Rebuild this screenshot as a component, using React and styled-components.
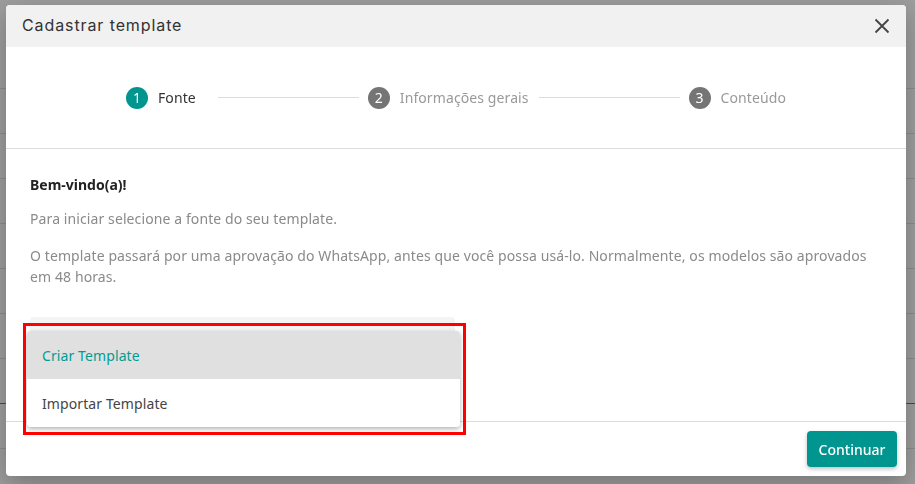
import React from 'react';
import styled, {createGlobalStyle} from "styled-components";

const GlobalStyle = createGlobalStyle`
  html, body {
    margin: 0;
    padding: 0;
    width: 915px;
    height: 484px;
    overflow: hidden;
  }
  body {
    font-family: "Noto Sans", "Open Sans", sans-serif;
  }
`;

const steps = [
    {n: 1, label: "Fonte", active: true},
    {n: 2, label: "Informações gerais"},
    {n: 3, label: "Conteúdo"},
];

const rows = Array.from({length: 9});

const App = () => {
    return (
        <>
            <GlobalStyle/>
            <StyledPage>
                {rows.map((_, i) => (
                    <StyledPageRow key={i} $dark={i === 7}/>
                ))}
            </StyledPage>
            <StyledBackdrop>
                <StyledModal>
                    <StyledHeader>
                        <h2>Cadastrar template</h2>
                        <StyledClose aria-label="Fechar">
                            <svg width="16" height="16" viewBox="0 0 16 16">
                                <path d="M1.5 1.5 L14.5 14.5 M14.5 1.5 L1.5 14.5" stroke="#444" strokeWidth="1.8" fill="none"/>
                            </svg>
                        </StyledClose>
                    </StyledHeader>
                    <StyledStepper>
                        {steps.map((step, i) => (
                            <React.Fragment key={step.n}>
                                {i > 0 && <StyledConnector $lead={i === 1}/>}
                                <StyledStep $active={step.active}>
                                    <span className="circle">{step.n}</span>
                                    <span className="label">{step.label}</span>
                                </StyledStep>
                            </React.Fragment>
                        ))}
                    </StyledStepper>
                    <StyledContent>
                        <StyledTitle>Bem-vindo(a)!</StyledTitle>
                        <StyledText>Para iniciar selecione a fonte do seu template.</StyledText>
                        <StyledText>
                            O template passará por uma aprovação do WhatsApp, antes que você possa usá-lo. Normalmente, os modelos são aprovados em 48 horas.
                        </StyledText>
                        <StyledSelectWrap>
                            <StyledSelect/>
                            <StyledMenu>
                                <StyledOption $selected>Criar Template</StyledOption>
                                <StyledOption>Importar Template</StyledOption>
                            </StyledMenu>
                            <StyledHighlight/>
                        </StyledSelectWrap>
                    </StyledContent>
                    <StyledFooter>
                        <StyledButton>Continuar</StyledButton>
                    </StyledFooter>
                </StyledModal>
            </StyledBackdrop>
        </>
    );
};

const StyledPage = styled.div`
  width: 915px;
  height: 484px;
  background: #fff;
  display: flex;
  flex-direction: column;
  padding-top: 88px;
  box-sizing: border-box;
  overflow: hidden;
`;
const StyledPageRow = styled.div`
  height: 45px;
  border-top: 1px solid ${p => p.$dark ? "#777" : "#e2e2e2"};
  box-sizing: border-box;
  flex-shrink: 0;
`;
const StyledBackdrop = styled.div`
  position: fixed;
  inset: 0;
  background: rgba(0, 0, 0, .39);
  padding: 5px 9px 8px 6px;
  box-sizing: border-box;
  display: flex;
`;
const StyledModal = styled.div`
  flex: 1;
  background: #fff;
  border-radius: 4px;
  overflow: hidden;
  display: flex;
  flex-direction: column;
  box-shadow: 0 8px 24px rgba(0,0,0,.25);
`;
const StyledHeader = styled.div`
  height: 42px;
  background: #f1f1f1;
  display: flex;
  align-items: center;
  justify-content: space-between;
  padding: 0 16px 0 16px;
  flex-shrink: 0;
  h2{
    margin: 0 0 2px 0;
    font-family: "Inter", "Lato", sans-serif;
    font-weight: 400;
    font-size: 16px;
    color: #333;
    letter-spacing: .9px;
  }
`;
const StyledClose = styled.button`
  border: 0;
  background: none;
  padding: 0;
  width: 16px;
  height: 16px;
  display: flex;
`;
const StyledStepper = styled.div`
  height: 102px;
  flex-shrink: 0;
  border-bottom: 1px solid #dcdcdc;
  display: flex;
  align-items: center;
  padding: 0 120px 0 120px;
  box-sizing: border-box;
`;
const StyledConnector = styled.div`
  flex: 1;
  height: 1px;
  background: #dcdcdc;
  margin: 0 9px 0 ${p => p.$lead ? "22px" : "10px"};
`;
const StyledStep = styled.div`
  display: flex;
  align-items: center;
  gap: 10px;
  .circle{
    width: 22px;
    height: 22px;
    border-radius: 50%;
    background: ${p => p.$active ? "#00968f" : "#757575"};
    color: #fff;
    font-size: 14px;
    display: flex;
    align-items: center;
    justify-content: center;
  }
  .label{
    font-size: 14px;
    letter-spacing: .1px;
    color: ${p => p.$active ? "#333" : "#999"};
  }
`;
const StyledContent = styled.div`
  flex: 1;
  padding: 26px 27px 0 24px;
  border-bottom: 1px solid #dcdcdc;
`;
const StyledTitle = styled.div`
  font-size: 14px;
  font-weight: 700;
  color: #222;
  margin-bottom: 14px;
`;
const StyledText = styled.p`
  margin: 0 0 16px 0;
  font-size: 14px;
  line-height: 21px;
  letter-spacing: .1px;
  color: #8a8a8a;
`;
const StyledSelectWrap = styled.div`
  position: relative;
  width: 425px;
  margin-top: 30px;
`;
const StyledSelect = styled.div`
  height: 40px;
  background: #f4f4f4;
  border-radius: 4px 4px 0 0;
`;
const StyledMenu = styled.div`
  position: absolute;
  top: 14px;
  left: -3px;
  width: 433px;
  background: #fff;
  border-radius: 4px;
  overflow: hidden;
  box-shadow: 0 2px 5px rgba(0,0,0,.3);
  z-index: 2;
`;
const StyledOption = styled.div`
  height: 48px;
  display: flex;
  align-items: center;
  padding: 0 15px;
  font-size: 14px;
  letter-spacing: .1px;
  background: ${p => p.$selected ? "#e0e0e0" : "#fff"};
  color: ${p => p.$selected ? "#009c94" : "#444"};
`;
const StyledHighlight = styled.div`
  position: absolute;
  top: 6px;
  left: -7px;
  width: 443px;
  height: 112px;
  border: 3px solid #f00;
  box-sizing: border-box;
  z-index: 3;
`;
const StyledFooter = styled.div`
  height: 54px;
  flex-shrink: 0;
  display: flex;
  align-items: center;
  justify-content: flex-end;
  padding: 0 9px;
`;
const StyledButton = styled.button`
  height: 36px;
  width: 90px;
  border: 0;
  border-radius: 4px;
  background: #00968f;
  color: #fff;
  font-family: "Noto Sans", sans-serif;
  font-size: 14px;
  font-weight: 500;
  box-shadow: 0 2px 4px rgba(0,0,0,.25);
`;

export default App;
